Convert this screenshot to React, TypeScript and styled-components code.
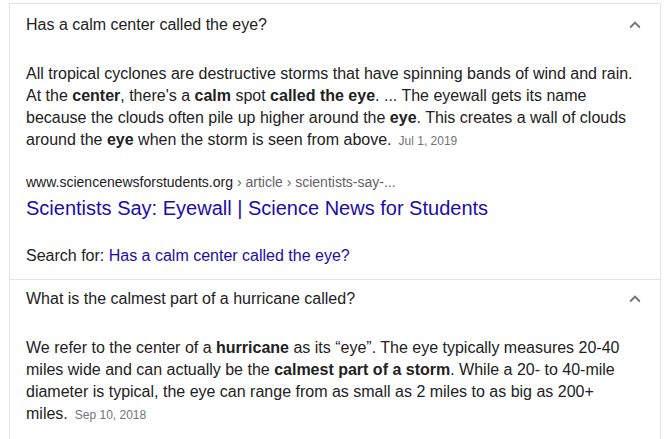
import React from "react";
import styled, { createGlobalStyle } from "styled-components";

const Global = createGlobalStyle`
  html, body { margin: 0; padding: 0; background: #fff; }
  body { font-family: "Liberation Sans", Arial, sans-serif; color: #222; }
`;

const Page = styled.div`
  padding: 3px 0 0 9px;
  width: 652px;
`;

const Box = styled.div`
  border: 1px solid #e2e3e5;
  border-bottom: none;
  display: flex;
  flex-direction: column;
`;

const Item = styled.section<{ $first?: boolean }>`
  border-top: ${(p) => (p.$first ? "none" : "1px solid #e2e3e5")};
  padding: 0 16px ${(p) => (p.$first ? 12 : 13)}px 16px;
`;

const QuestionRow = styled.div<{ $top: number }>`
  display: flex;
  align-items: center;
  justify-content: space-between;
  padding-top: ${(p) => p.$top}px;
  height: 22px;
  margin-bottom: 27px;
`;

const Question = styled.div`
  font-size: 16px;
  line-height: 22px;
  color: #222;
`;

const Chevron = styled.svg`
  width: 22px;
  height: 22px;
  fill: #70757a;
  margin-right: -2px;
  flex: none;
`;

const Answer = styled.div`
  font-size: 16px;
  line-height: 22px;
  color: #222;
  b { font-weight: bold; color: #222; }
`;

const DateTag = styled.span`
  font-size: 12px;
  color: #70757a;
  margin-left: 7px;
`;

const Source = styled.div`
  margin-top: 20px;
  display: flex;
  flex-direction: column;
  gap: 3px;
`;

const Cite = styled.div`
  font-size: 14px;
  line-height: 20px;
  color: #202124;
`;

const Crumbs = styled.span`
  color: #5f6368;
`;

const Title = styled.a`
  font-size: 20px;
  line-height: 26px;
  color: #1a0dab;
  text-decoration: none;
`;

const SearchFor = styled.div`
  margin-top: 24px;
  font-size: 16px;
  line-height: 22px;
  color: #222;
`;

const SearchLink = styled.a`
  color: #1a0dab;
  text-decoration: none;
`;

const Up = () => (
  <Chevron viewBox="0 0 24 24">
    <path d="M12 8l-6 6 1.41 1.41L12 10.83l4.59 4.58L18 14z" />
  </Chevron>
);

export default function App() {
  return (
    <>
      <Global />
      <Page>
        <Box>
          <Item $first>
            <QuestionRow $top={10}>
              <Question>Has a calm center called the eye?</Question>
              <Up />
            </QuestionRow>
            <Answer>
              All tropical cyclones are destructive storms that have spinning bands of wind and rain. At
              the <b>center</b>, there's a <b>calm</b> spot <b>called the eye</b>. ... The eyewall gets its name
              because the clouds often pile up higher around the <b>eye</b>. This creates a wall of clouds
              around the <b>eye</b> when the storm is seen from above.
              <DateTag>Jul 1, 2019</DateTag>
            </Answer>
            <Source>
              <Cite>
                www.sciencenewsforstudents.org<Crumbs> › article › scientists-say-...</Crumbs>
              </Cite>
              <Title href="#">Scientists Say: Eyewall | Science News for Students</Title>
            </Source>
            <SearchFor>
              Search for: <SearchLink href="#">Has a calm center called the eye?</SearchLink>
            </SearchFor>
          </Item>
          <Item>
            <QuestionRow $top={8}>
              <Question>What is the calmest part of a hurricane called?</Question>
              <Up />
            </QuestionRow>
            <Answer>
              We refer to the center of a <b>hurricane</b> as its “eye”. The eye typically measures 20-40
              miles wide and can actually be the <b>calmest part of a storm</b>. While a 20- to 40-mile
              diameter is typical, the eye can range from as small as 2 miles to as big as 200+
              miles.
              <DateTag>Sep 10, 2018</DateTag>
            </Answer>
          </Item>
        </Box>
      </Page>
    </>
  );
}
